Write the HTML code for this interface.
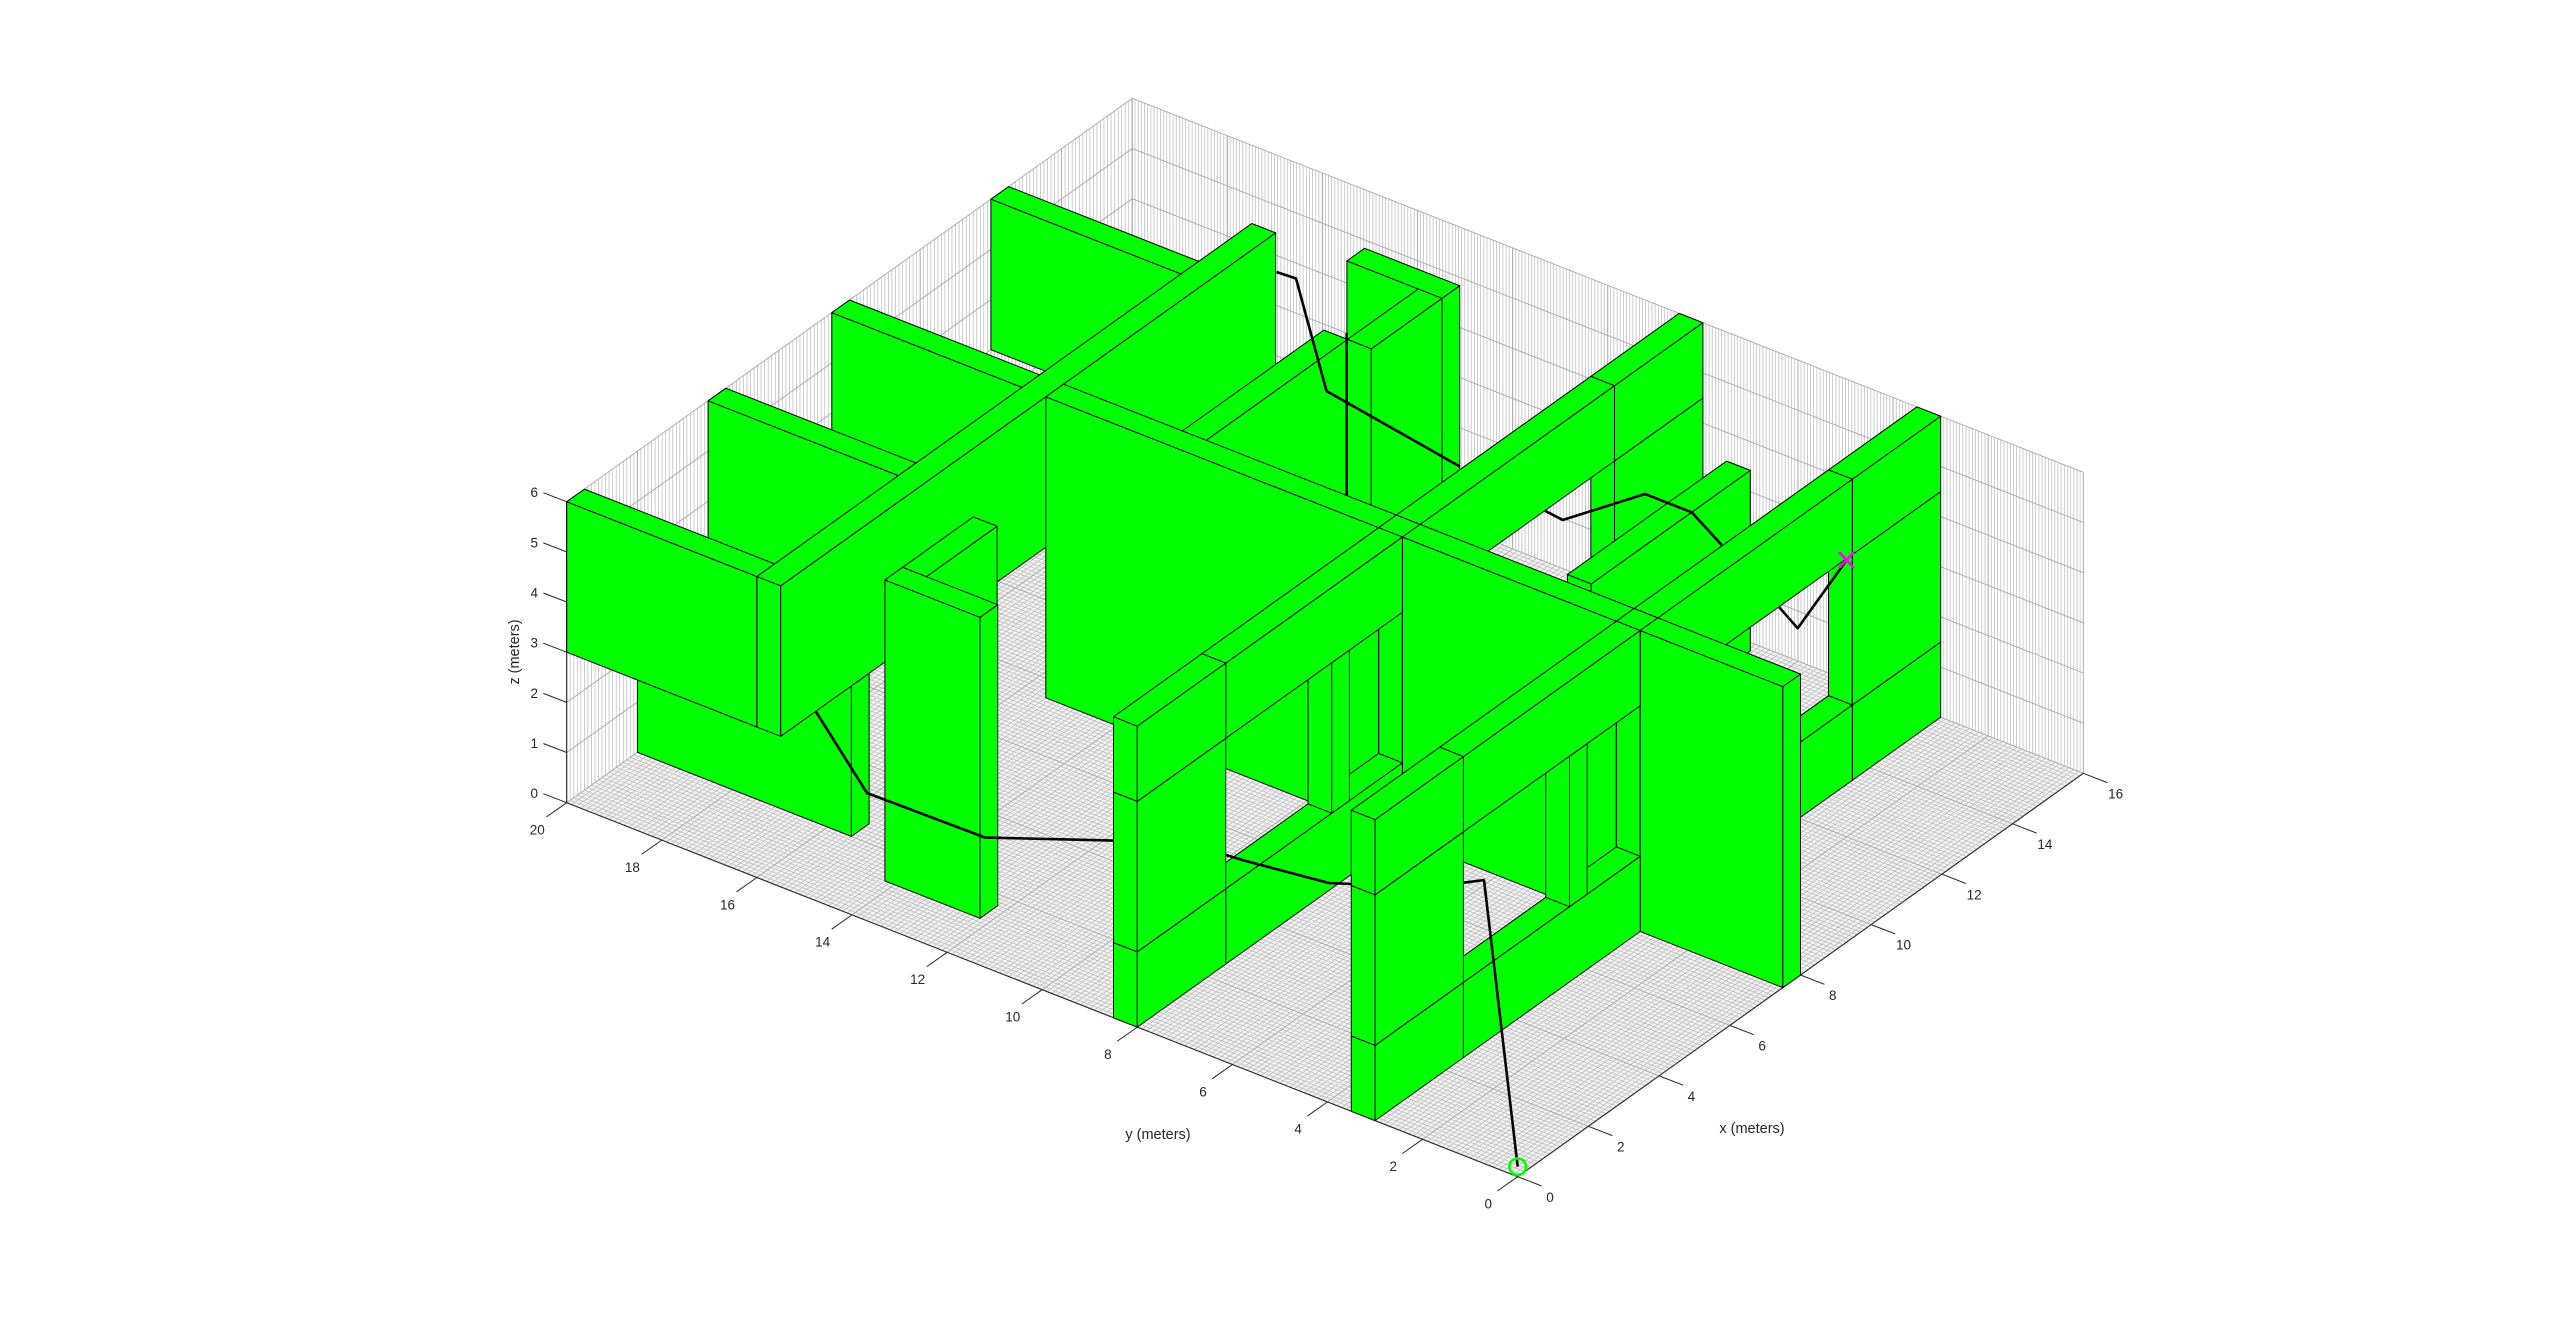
<!DOCTYPE html>
<html><head><meta charset="utf-8"><style>
html,body{margin:0;padding:0;background:#fff;}
svg{display:block;}
text{font-family:"Liberation Sans",Arial,sans-serif;fill:#262626;}
</style></head><body>
<svg id="s" xmlns="http://www.w3.org/2000/svg" width="2560" height="1323" viewBox="0 0 2560 1323">
<rect width="2560" height="1323" fill="#fff"/>
<g id="grid"></g>
<g id="boxes"></g>
<g id="path" fill="none" stroke="#000" stroke-width="2.6" stroke-linejoin="round">
<polyline points="1517.7,1166.7 1484,880 1464,882.7"/>
<polyline points="1352,884 1329,883 1246,861 1226,855"/>
<polyline points="1114,840.6 985,837.5 867,793 815.5,711"/>
<polyline points="1276.5,272 1296,278.5 1326.5,391 1460,466.6"/>
<polyline points="1545,510.7 1562.7,520 1645,494 1691.7,512.3 1721.7,545"/>
<polyline points="1779.3,607.3 1797.7,628.3 1846.7,560"/>
<line x1="1346.7" y1="333" x2="1346.7" y2="495"/>
</g>
<circle cx="1517.7" cy="1166.7" r="8.3" fill="none" stroke="#00ff00" stroke-width="2.6"/>
<g stroke="#ff00ff" stroke-width="2.6"><line x1="1839" y1="552" x2="1854" y2="568"/><line x1="1839" y1="568" x2="1854" y2="552"/></g>
<g id="ticks" stroke="#262626" stroke-width="1"></g>
<g font-size="13.5" text-anchor="middle" dominant-baseline="central">
<text x="1550" y="1197.3">0</text><text x="1620.7" y="1146.9">2</text><text x="1691.4" y="1096.5">4</text><text x="1762.1" y="1046">6</text><text x="1832.8" y="995.6">8</text><text x="1903.5" y="945.2">10</text><text x="1974.2" y="894.8">12</text><text x="2044.9" y="844.3">14</text><text x="2115.6" y="793.9">16</text>
<text x="1488.3" y="1204">0</text><text x="1393.2" y="1166.6">2</text><text x="1298.1" y="1129.2">4</text><text x="1203" y="1091.8">6</text><text x="1107.9" y="1054.4">8</text><text x="1012.8" y="1017">10</text><text x="917.7" y="979.6">12</text><text x="822.6" y="942.2">14</text><text x="727.5" y="904.8">16</text><text x="632.4" y="867.4">18</text><text x="537.3" y="830">20</text>
</g>
<g font-size="13.5" text-anchor="end" dominant-baseline="central">
<text x="538" y="492.7">6</text><text x="538" y="542.9">5</text><text x="538" y="593">4</text><text x="538" y="643.2">3</text><text x="538" y="693.4">2</text><text x="538" y="743.5">1</text><text x="538" y="793.7">0</text>
</g>
<g font-size="14.5" text-anchor="middle" dominant-baseline="central">
<text x="1752" y="1129">x (meters)</text>
<text x="1158" y="1135">y (meters)</text>
<text x="515" y="652" transform="rotate(-90 515 652)">z (meters)</text>
</g>
</svg>
<script>
(function(){
var NS="http://www.w3.org/2000/svg";
function P(x,y,z){return [1517.7+35.35*x-47.55*y,1176.7-25.21*x-18.7*y-50.17*z];}
function el(tag,attrs,parent){var e=document.createElementNS(NS,tag);for(var k in attrs)e.setAttribute(k,attrs[k]);parent.appendChild(e);return e;}
function pts(a){return a.map(function(p){return p[0].toFixed(1)+","+p[1].toFixed(1);}).join(" ");}
var g=document.getElementById("grid");
el("polygon",{points:pts([P(0,0,0),P(16,0,0),P(16,20,0),P(0,20,0)]),fill:"#f2f2f2"},g);
var d="";
function L(a,b){d+="M"+a[0].toFixed(1)+" "+a[1].toFixed(1)+"L"+b[0].toFixed(1)+" "+b[1].toFixed(1);}
for(var i=0;i<=160;i++){var x=i*0.1;L(P(x,0,0),P(x,20,0));}
for(var i=0;i<=200;i++){var y=i*0.1;L(P(0,y,0),P(16,y,0));}
el("path",{d:d,stroke:"#b0b0b0","stroke-width":"0.6",fill:"none"},g);
d="";
for(var i=0;i<=160;i++){var x=i*0.1;L(P(x,20,0),P(x,20,6));}
for(var i=0;i<=300;i++){var y=i*0.0667;L(P(16,y,0),P(16,y,6));}
el("path",{d:d,stroke:"#b8b8b8","stroke-width":"0.7",fill:"none"},g);
d="";
for(var z=1;z<=6;z++){L(P(0,20,z),P(16,20,z));L(P(16,20,z),P(16,0,z));}
for(var x=0;x<=16;x+=2){L(P(x,20,0),P(x,20,6));L(P(x,0,0),P(x,20,0));}
for(var y=0;y<=20;y+=2){L(P(16,y,0),P(16,y,6));L(P(0,y,0),P(16,y,0));}
el("path",{d:d,stroke:"#a8a8a8","stroke-width":"0.9",fill:"none"},g);
d="";L(P(0,0,0),P(16,0,0));L(P(0,0,0),P(0,20,0));L(P(0,20,0),P(0,20,6));
el("path",{d:d,stroke:"#262626","stroke-width":"1.1",fill:"none"},g);
var t=document.getElementById("ticks");d="";
for(var x=0;x<=16;x+=2){var p=P(x,0,0);L(p,[p[0]+24,p[1]+9.3]);}
for(var y=0;y<=20;y+=2){var p=P(0,y,0);L(p,[p[0]-20.3,p[1]+14.3]);}
for(var z=0;z<=6;z++){var p=P(0,20,z);L(p,[p[0]-23.4,p[1]-9]);}
el("path",{d:d},t);
var B=document.getElementById("boxes");
function box(x0,x1,y0,y1,z0,z1){
 var f=[[P(x0,y0,z0),P(x0,y1,z0),P(x0,y1,z1),P(x0,y0,z1)],
        [P(x0,y0,z0),P(x1,y0,z0),P(x1,y0,z1),P(x0,y0,z1)],
        [P(x0,y0,z1),P(x1,y0,z1),P(x1,y1,z1),P(x0,y1,z1)]];
 f.forEach(function(q){el("polygon",{points:pts(q),fill:"#00ff00",stroke:"#000","stroke-width":"1","stroke-linejoin":"round"},B);});
}
function stack(x0,x1,y0,y1){box(x0,x1,y0,y1,0,1.5);box(x0,x1,y0,y1,1.5,4.5);box(x0,x1,y0,y1,4.5,6);}
box(12,12.5,16,20,3,6);
box(7.5,8,16,20,3,6);
box(4,4.5,16,20,3,6);
box(2,2.5,15.5,20,0,3);
box(0,0.5,16,20,3,6);
box(0,14,15.5,16,3,6);
box(14,14.5,12,14,0,6);
box(8,12,12.5,13,0,6);
box(12,14,12,12.5,0,6);
stack(13.5,16,8,8.5);
box(8,13.5,8,8.5,0,1.5);box(8,13.5,8,8.5,4.5,6);
box(8.2,12.7,4.55,5.05,2.4,6);
stack(13.5,16,3,3.5);
box(8,13.5,3,3.5,0,1.5);box(8,13.5,3,3.5,4.5,6);
box(7.5,8,8.5,15.5,0,6);
box(7.5,8,8,8.5,0,6);
box(7.5,8,3.5,8,0,6);
box(7.5,8,3,3.5,0,6);
box(7.5,8,0,3,0,6);
box(1.7,3.7,13.7,14.2,2,6);
box(1.2,1.7,12.2,14.2,0,6);
box(2.5,7.5,8,8.5,0,1.5);box(5.5,6,8,8.5,1.5,4.5);box(2.5,7.5,8,8.5,4.5,6);
stack(0,2.5,8,8.5);
box(2.5,7.5,3,3.5,0,1.5);box(5.5,6,3,3.5,1.5,4.5);box(2.5,7.5,3,3.5,4.5,6);
stack(0,2.5,3,3.5);
})();
</script>
</body></html>
